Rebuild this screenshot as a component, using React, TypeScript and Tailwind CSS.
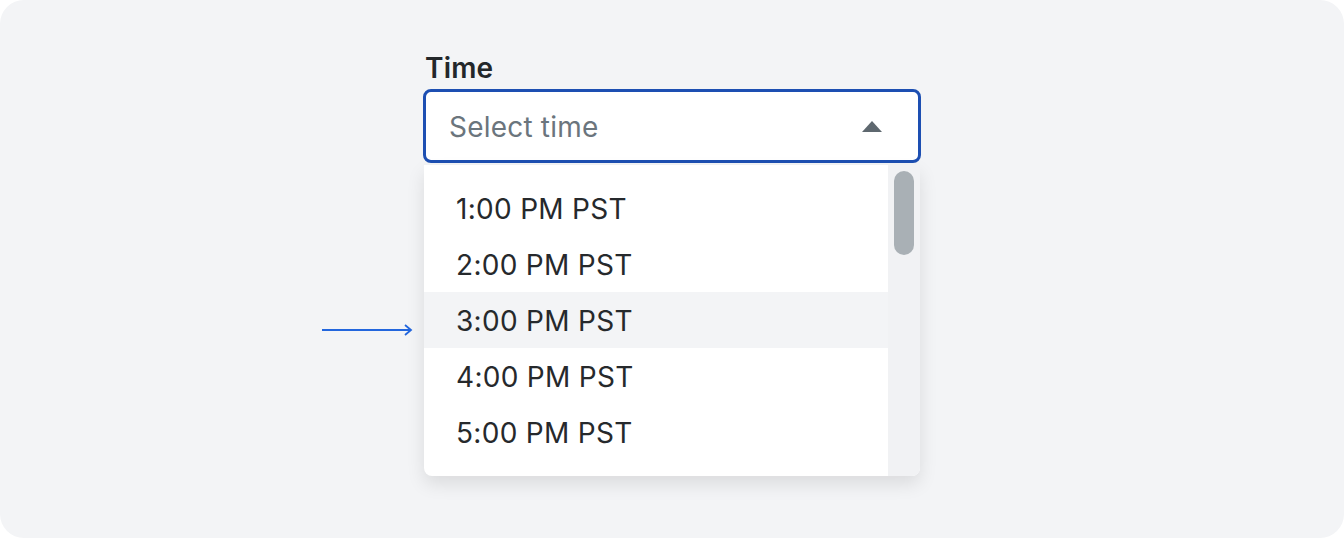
const times = ["1:00 PM PST", "2:00 PM PST", "3:00 PM PST", "4:00 PM PST", "5:00 PM PST"];

export default function App() {
  return (
    <div className="h-[538px] w-[1344px] bg-white font-['Inter',_'Noto_Sans',_sans-serif]">
      <div className="relative h-full w-full rounded-[24px] bg-[#f3f4f6]">
        {/* pointer annotation */}
        <svg
          className="absolute left-[321px] top-[322px]"
          width="92"
          height="16"
          viewBox="0 0 92 16"
          fill="none"
        >
          <path d="M1 8H90" stroke="#2266dd" strokeWidth="1.8" />
          <path d="M84 3L90 8L84 13" stroke="#2266dd" strokeWidth="1.8" />
        </svg>

        <div className="absolute left-[423px] top-[50px] w-[498px]">
          <label className="block pl-[2px] text-[28px] font-semibold leading-[36px] tracking-[0.2px] text-[#23272a]">
            Time
          </label>
          <div className="mt-[3px] flex h-[74px] items-center justify-between rounded-[8px] border-[3px] border-[#1d4fb2] bg-white pl-[23px] pr-[36px]">
            <span className="pt-[1px] text-[28px] tracking-[0.2px] text-[#6b757d]">Select time</span>
            <svg width="20" height="11" viewBox="0 0 20 11">
              <path d="M10 0L20 11H0Z" fill="#5e686f" />
            </svg>
          </div>

          <div className="relative">
            <div className="absolute left-px top-[2px] flex h-[311px] w-[496px] overflow-hidden rounded-b-[8px] bg-white shadow-[0_8px_18px_rgba(0,0,0,0.1)]">
              <ul className="flex-1 pt-[15px]">
                {times.map((t) => (
                  <li
                    key={t}
                    className={`flex h-[56px] items-center pl-[32px] pt-[2px] text-[28px] tracking-[0.3px] text-[#26292c] ${
                      t === "3:00 PM PST" ? "bg-[#f3f4f6]" : ""
                    }`}
                  >
                    {t}
                  </li>
                ))}
              </ul>
              <div className="w-[32px] bg-[#f1f2f4] pl-[6px] pt-[6px]">
                <div className="h-[84px] w-[20px] rounded-full bg-[#a9b0b5]" />
              </div>
            </div>
          </div>
        </div>
      </div>
    </div>
  );
}
